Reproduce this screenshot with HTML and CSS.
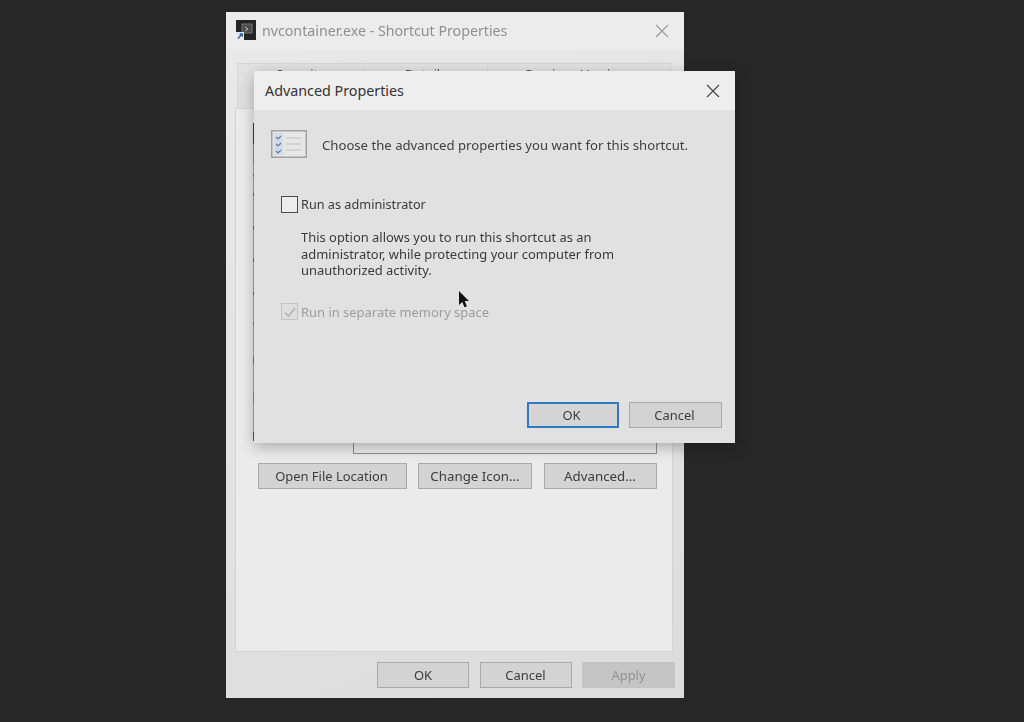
FILE: index.html
```html
<!DOCTYPE html>
<html lang="en">
<head>
<meta charset="utf-8">
<title>Advanced Properties</title>
<link rel="stylesheet" href="styles.css">
</head>
<body>
<section class="window back">
  <header class="titlebar back-title">
    <svg class="app-icon" viewBox="0 0 20 20" width="20" height="20" aria-hidden="true">
      <rect width="20" height="20" fill="#242424"/>
      <rect x="6" y="4" width="10" height="9" fill="#4a4a4a" stroke="#777" stroke-width="1"/>
      <path d="M9 7l3 2-3 2" fill="none" stroke="#bbb" stroke-width="1"/>
      <rect x="0" y="12" width="8" height="8" fill="#e8e8e8"/>
      <path d="M2 18.5l3.5-4M3.6 14h2.7v2.7" fill="none" stroke="#2a62b0" stroke-width="1.4"/>
    </svg>
    <span class="back-name">nvcontainer.exe - Shortcut Properties</span>
    <svg class="close back-close" viewBox="0 0 14 14" width="14" height="14" aria-hidden="true"><path d="M1 1l12 12M13 1L1 13"/></svg>
  </header>
  <div class="back-body">
    <div class="tabs">
      <span class="tab t1">Security</span>
      <span class="tab t2">Details</span>
      <span class="tab t3">Previous Versions</span>
    </div>
    <div class="tabs-second"></div>
    <div class="panel">
      <i class="mark line"></i>
      <i class="mark m1"></i><i class="mark m2"></i><i class="mark m3"></i><i class="mark m4"></i><i class="mark m5"></i>
      <i class="mark m6"></i><i class="mark m7"></i><i class="mark m8"></i><i class="mark m9"></i><i class="mark m10"></i><i class="mark m11"></i>
      <div class="field"></div>
      <div class="panel-actions">
        <button class="btn a1">Open File Location</button>
        <button class="btn a2">Change Icon...</button>
        <button class="btn a3">Advanced...</button>
      </div>
    </div>
    <div class="footer">
      <button class="btn f">OK</button>
      <button class="btn f">Cancel</button>
      <button class="btn f off">Apply</button>
    </div>
  </div>
</section>

<section class="window dialog">
  <header class="titlebar dlg-title">
    <span>Advanced Properties</span>
    <svg class="close" viewBox="0 0 14 14" width="14" height="14" aria-hidden="true"><path d="M1 1l12 12M13 1L1 13"/></svg>
  </header>
  <div class="dlg-body">
    <div class="intro">
      <svg class="list-icon" viewBox="0 0 36 28" width="36" height="28" aria-hidden="true">
        <rect x=".75" y=".75" width="34.5" height="26.5" fill="#e6e6e6" stroke="#a0a0a0" stroke-width="1.5"/>
        <rect x="3" y="3" width="9" height="22" fill="#d2dbe6"/>
        <path d="M5 7l2 2 3-3M5 14l2 2 3-3M5 21l2 2 3-3" fill="none" stroke="#5f7da3" stroke-width="1.2"/>
        <path d="M15 8h15M15 14h15M15 20h15" stroke="#cdcdcd" stroke-width="1.5"/>
      </svg>
      <p>Choose the advanced properties you want for this shortcut.</p>
    </div>
    <label class="check-row admin">
      <span class="box"></span>
      <span>Run as administrator</span>
    </label>
    <p class="note">This option allows you to run this shortcut as an administrator, while protecting your computer from unauthorized activity.</p>
    <label class="check-row disabled">
      <span class="box">
        <svg viewBox="0 0 16 16" width="16" height="16" aria-hidden="true"><path d="M3 8.5l3.5 3.5L13 4" fill="none" stroke="#b4b4b4" stroke-width="1.6"/></svg>
      </span>
      <span>Run in separate memory space</span>
    </label>
    <div class="dlg-actions">
      <button class="btn d default">OK</button>
      <button class="btn d cancel">Cancel</button>
    </div>
  </div>
  <svg class="cursor" viewBox="0 0 12 18" width="12" height="18" aria-hidden="true"><path d="M0 0v14l3.3-3 2.2 5.2 2.4-1-2.2-5.1H10z" fill="#111"/></svg>
</section>
</body>
</html>
```
FILE: styles.css
```css
* { box-sizing: border-box; }
html, body { height: 100%; }
body {
  margin: 0;
  background: #272727;
  font-family: "Noto Sans", "Open Sans", sans-serif;
  font-size: 12.95px;
  color: #3a3a3a;
  overflow: hidden;
}
.window { position: absolute; filter: blur(.5px); }
.back {
  left: 226px; top: 12px; width: 458px; height: 686px;
  background: linear-gradient(160deg, #e9e9e9, #dcdcdc);
  display: flex; flex-direction: column;
}
.titlebar { display: flex; align-items: center; flex: none; }
.back-title { height: 38px; background: #ececec; padding: 0 15px 2px 10px; gap: 6px; }
.app-icon { filter: blur(.3px); }
.back-name { flex: 1; font-size: 14.2px; color: #8f8f8f; }
.close { fill: none; stroke: #444; stroke-width: 1.1; }
.back-close { stroke: #999; margin-top: 2px; }
.back-body { flex: 1; display: flex; flex-direction: column; padding: 13px 9px 10px 9px; min-height: 0; }
.tabs { display: flex; height: 22px; margin-left: 2px; margin-right: 4px; flex: none; background: #e2e2e2; border: 1px solid #d6d6d6; border-bottom: 0; }
.tab { text-align: center; line-height: 21px; overflow: hidden; color: #555; }
.t1 { width: 125px; }
.t2 { width: 124px; border-left: 1px solid #d6d6d6; }
.t3 { flex: 1; border-left: 1px solid #d6d6d6; }
.tabs-second { height: 23px; margin: 0 4px 0 2px; flex: none; background: #e0e0e0; border-left: 1px solid #d6d6d6; border-right: 1px solid #d6d6d6; }
.panel {
  width: 438px; height: 544px; flex: none; background: #ebebeb; border: 1px solid #d3d3d3;
  display: flex; flex-direction: column; position: relative;
  padding: 311px 15px 0 22px;
}
.mark { position: absolute; left: 17px; width: 1px; height: 5px; background: #777; }
.line { top: 14px; height: 318px; background: #a8a8a8; }
.m1 { top: 14px; height: 21px; background: #3c3c3c; }
.m2 { top: 35px; height: 20px; background: #8a8a8a; }
.m3 { top: 65px; height: 3px; }
.m4 { top: 84px; height: 3px; background: #666; }
.m5 { top: 117px; height: 3px; background: #666; }
.m6 { top: 150px; height: 3px; background: #666; }
.m7 { top: 183px; height: 3px; background: #666; }
.m8 { top: 213px; height: 3px; }
.m9 { top: 248px; height: 7px; }
.m10 { top: 284px; height: 10px; background: #888; }
.m11 { top: 323px; height: 9px; background: #555; }
.field { height: 34px; margin-left: 95px; border: 1.5px solid #8e8e8e; border-top: 0; flex: none; }
.panel-actions { display: flex; gap: 11px; margin-top: 9px; }
.btn {
  font: inherit; color: #3c3c3c; height: 26px; padding: 0;
  background: #d3d3d3; border: 1px solid #a9a9a9; border-radius: 0;
}
.a1 { width: 149px; padding-right: 2px; }
.a2 { width: 114px; font-size: 13.3px; }
.a3 { width: 113px; margin-left: 1px; font-size: 13.3px; padding-right: 1px; }
.footer { display: flex; justify-content: flex-end; gap: 10.5px; margin-top: 10px; flex: none; }
.f { width: 92px; }
.off { width: 93px; background: #c5c5c5; border-color: #c5c5c5; color: #929292; }

.dialog {
  left: 254px; top: 71px; width: 481px; height: 372px;
  background: #e1e1e1;
  box-shadow: 0 4px 14px rgba(0,0,0,.28);
  display: flex; flex-direction: column;
}
.dlg-title { height: 39px; background: #eeeeee; padding: 0 15px 0 11px; justify-content: space-between; font-size: 14.3px; color: #333; }
.dlg-body { flex: 1; display: flex; flex-direction: column; padding: 20px 13px 15px 17px; min-height: 0; }
.intro { display: flex; align-items: center; gap: 15px; height: 28px; flex: none; }
.intro p { margin: 2px 0 0; color: #404040; font-size: 13.15px; }
.check-row { display: flex; align-items: center; gap: 3px; margin-left: 10px; height: 18px; flex: none; }
.intro + .check-row { margin-top: 37px; }
.admin { font-size: 12.7px; }
.box { width: 17px; height: 17px; border: 1px solid #4a4a4a; background: #ececec; display: block; flex: none; }
.note { margin: 16px 60px 0 30px; line-height: 16.6px; }
.disabled { margin-top: 24px; color: #9c9c9c; }
.disabled .box { border-color: #c4c4c4; background: #dedede; }
.disabled svg { display: block; }
.dlg-actions { margin-top: auto; display: flex; justify-content: flex-end; gap: 10px; }
.d { width: 93px; }
.cancel { padding-right: 2px; }
.default { width: 92px; border: 2px solid #2f7ac6; background: #d5d5d5; padding-right: 3px; }
.cursor { position: absolute; left: 205px; top: 220px; }
```
